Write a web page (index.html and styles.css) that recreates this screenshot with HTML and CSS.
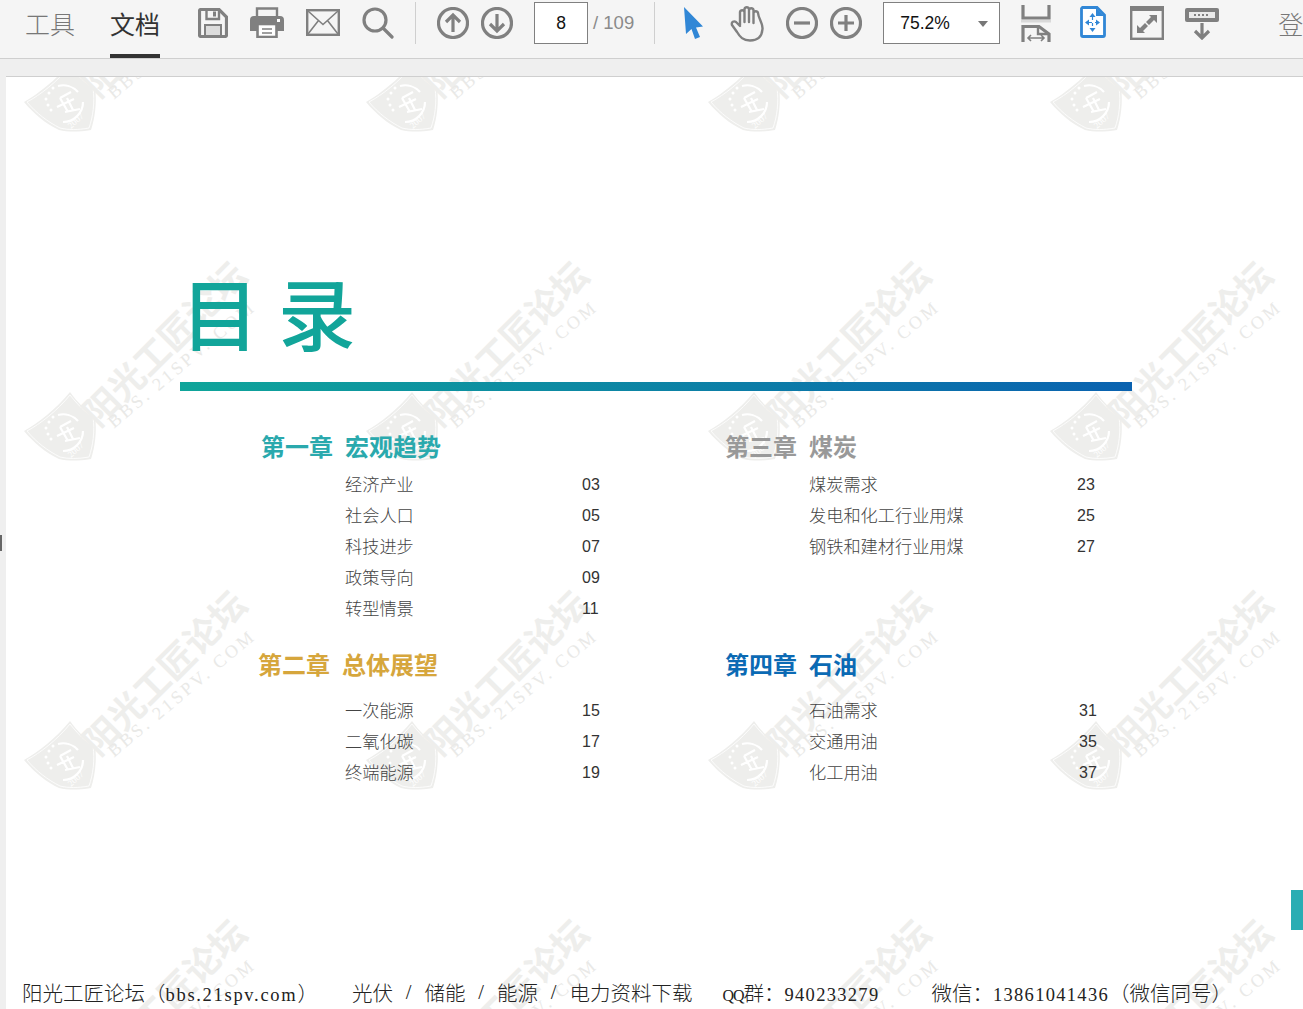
FILE: index.html
```html
<!DOCTYPE html>
<html lang="zh-CN">
<head>
<meta charset="utf-8">
<title>目录</title>
<link rel="stylesheet" href="styles.css">
</head>
<body>
<svg class="defs" width="0" height="0" aria-hidden="true">
  <defs>
    <symbol id="shield" viewBox="0 0 72 70">
      <path d="M0 40 C14 32 32 18 46 1 C54 12 62 20 71 25 C73 40 71 56 67 68 C54 70 44 70 35 68 C22 62 10 52 0 40Z" fill="#eeeeec"/>
      <path d="M3 40 C16 33 33 20 46 4 C54 14 61 21 69 26 C71 40 69 55 65 66 C54 68 44 68 36 66 C24 60 12 51 3 40Z" fill="none" stroke="#fff" stroke-width=".8"/>
      <path d="M34 24 A20 20 0 0 1 54 30 M59 40 A20 20 0 0 1 39 60" fill="none" stroke="#fff" stroke-width="2.2"/>
      <path d="M36 36 L47 30 M36 36 L44 50 M33 45 L50 37 M43 36 L49 48 M41 50 L56 47" fill="none" stroke="#fff" stroke-width="2.2"/>
      <circle cx="29" cy="26" r="1.5" fill="#fff"/><circle cx="25" cy="31" r="1.5" fill="#fff"/><circle cx="22" cy="37" r="1.5" fill="#fff"/><circle cx="24" cy="43" r="1.5" fill="#fff"/><circle cx="27" cy="48" r="1.5" fill="#fff"/>
      <text x="47" y="67" class="wm-year" transform="rotate(-42 47 67)">2007</text>
    </symbol>
  </defs>
</svg>

<header class="toolbar">
  <span class="tab tab-tools">工具</span>
  <span class="tab tab-doc">文档</span>

  <svg class="ic ic-save" width="30" height="30" viewBox="0 0 30 30"><path class="ln" d="M2.5 1.5H21L28.5 9V27A1.5 1.5 0 0 1 27 28.5H3A1.5 1.5 0 0 1 1.5 27V3A1.5 1.5 0 0 1 2.5 1.5Z"/><path class="ln2" d="M8.5 2V11H21V2"/><rect class="fl" x="15" y="3.5" width="3" height="5"/><rect x="7" y="17" width="16" height="11" fill="#dcdcdc" stroke="#808080" stroke-width="2"/></svg>
  <svg class="ic ic-print" width="34" height="32" viewBox="0 0 34 32"><path class="ln2" d="M7 12V2.5H27V12"/><path class="fl" d="M4 10H30A4 4 0 0 1 34 14V25H27V19H7V25H0V14A4 4 0 0 1 4 10Z"/><rect x="7.5" y="18" width="19" height="13" fill="#fff" stroke="#808080" stroke-width="2.6"/><path class="ln1" d="M12 23H22M12 27H22"/><rect x="27" y="13" width="3" height="3" fill="#fff"/></svg>
  <svg class="ic ic-mail" width="34" height="27" viewBox="0 0 34 27"><rect class="ln2" x="1.2" y="1.2" width="31.6" height="24.6"/><path class="ln1" d="M2 2L17 15.5L32 2M2 25L12.5 11.5M32 25L21.5 11.5"/></svg>
  <svg class="ic ic-search" width="32" height="32" viewBox="0 0 32 32"><circle class="ln" cx="13" cy="13" r="11"/><path class="ln" d="M21 21L30 30" stroke-linecap="round"/></svg>
  <span class="sep"></span>
  <svg class="ic ic-up" width="32" height="32" viewBox="0 0 32 32"><circle class="ln" cx="16" cy="16" r="14.5"/><path class="ln" d="M16 25V8M9 15L16 8L23 15"/></svg>
  <svg class="ic ic-down" width="32" height="32" viewBox="0 0 32 32"><circle class="ln" cx="16" cy="16" r="14.5"/><path class="ln" d="M16 7V24M9 17L16 24L23 17"/></svg>
  <span class="box page-box">8</span>
  <span class="page-total">/ 109</span>
  <span class="sep sep-b"></span>
  <svg class="ic ic-cursor" width="21" height="32" viewBox="0 0 21 32"><path fill="#3187d6" d="M1 0L20 19.5L13 20.5L17 30L12 32L8.500 22L3 27Z"/></svg>
  <svg class="ic ic-hand" width="35" height="37" viewBox="0 0 35 37"><path class="ln2" stroke-width="2.800" stroke-linejoin="round" stroke-linecap="round" d="M10 20V7A2.300 2.300 0 0 1 14.500 7V17M14.500 17V4A2.300 2.300 0 0 1 19 4V17M19 17V5A2.300 2.300 0 0 1 23.500 5V18M23.500 18V8A2.300 2.300 0 0 1 28 8C28.500 14 33 18 32.500 24C32 31 28 35.500 20 35.500C13 35.500 10 32 7 27L2 20C1 17 4 15.500 6 17L10 21"/></svg>
  <svg class="ic ic-minus" width="32" height="32" viewBox="0 0 32 32"><circle class="ln" cx="16" cy="16" r="14.500"/><path class="ln" d="M8 16H24"/></svg>
  <svg class="ic ic-plus" width="32" height="32" viewBox="0 0 32 32"><circle class="ln" cx="16" cy="16" r="14.500"/><path class="ln" d="M8 16H24M16 8V24"/></svg>
  <span class="box zoom-box">75.2%<i class="caret"></i></span>
  <svg class="ic ic-fitw" width="30" height="37" viewBox="0 0 30 37"><path class="ln" d="M2 0V13H28V0"/><rect x="0" y="15" width="30" height="2.500" fill="#d9d9d9"/><path class="ln" d="M2 37V21.500H18L28 29V37"/><path class="ln2" d="M17 22V29H27"/><path class="ln1" d="M7 33H23M10 30L7 33L10 36M20 30L23 33L20 36"/></svg>
  <svg class="ic ic-fitp" width="26" height="32" viewBox="0 0 26 32"><path fill="#fff" stroke="#3187d6" stroke-width="2.800" d="M2.500 1.500H17L24.500 9V29A1.500 1.500 0 0 1 23 30.500H3A1.500 1.500 0 0 1 1.500 29V2.500Z"/><path fill="#3187d6" d="M16 2L24 10H16Z"/><path fill="#3187d6" d="M12.500 7L15.500 11H9.500ZM12.500 26L15.500 22H9.500ZM5 16.500L9 13.500V19.500ZM20 16.500L16 13.500V19.500Z"/><path stroke="#3187d6" stroke-width="1.200" stroke-dasharray="3 3" d="M12.500 11V22M9 16.500H16"/></svg>
  <svg class="ic ic-full" width="34" height="34" viewBox="0 0 34 34"><rect class="ln2" x="1.200" y="1.200" width="31.600" height="31.600"/><rect class="fl" x="1" y="1" width="32" height="4"/><path fill="#808080" d="M19 9H27V17L24 14L19 19L16 16L21 11ZM15 27H7V19L10 22L15 17L18 20L13 25Z"/></svg>
  <svg class="ic ic-read" width="34" height="32" viewBox="0 0 34 32"><rect class="fl" x="0" y="0" width="34" height="14" rx="2"/><rect x="4" y="4" width="26" height="6" fill="#eaeaea"/><path stroke="#808080" stroke-width="2" stroke-dasharray="2 2" d="M9 7H25"/><path class="ln" d="M17 15V30M10 23L17 30L24 23"/></svg>
  <span class="tab tab-login">登录</span>
</header>

<main class="viewer">
  <div class="gutter"><i class="gutter-mark"></i></div>
  <section class="page">
    <div class="wm-layer" aria-hidden="true">
      <div class="wm"><svg class="wm-shield"><use href="#shield"/></svg><span class="wm-name">阳光工匠论坛</span><span class="wm-url">BBS. 21SPV. COM</span></div>
      <div class="wm"><svg class="wm-shield"><use href="#shield"/></svg><span class="wm-name">阳光工匠论坛</span><span class="wm-url">BBS. 21SPV. COM</span></div>
      <div class="wm"><svg class="wm-shield"><use href="#shield"/></svg><span class="wm-name">阳光工匠论坛</span><span class="wm-url">BBS. 21SPV. COM</span></div>
      <div class="wm"><svg class="wm-shield"><use href="#shield"/></svg><span class="wm-name">阳光工匠论坛</span><span class="wm-url">BBS. 21SPV. COM</span></div>
      <div class="wm"><svg class="wm-shield"><use href="#shield"/></svg><span class="wm-name">阳光工匠论坛</span><span class="wm-url">BBS. 21SPV. COM</span></div>
      <div class="wm"><svg class="wm-shield"><use href="#shield"/></svg><span class="wm-name">阳光工匠论坛</span><span class="wm-url">BBS. 21SPV. COM</span></div>
      <div class="wm"><svg class="wm-shield"><use href="#shield"/></svg><span class="wm-name">阳光工匠论坛</span><span class="wm-url">BBS. 21SPV. COM</span></div>
      <div class="wm"><svg class="wm-shield"><use href="#shield"/></svg><span class="wm-name">阳光工匠论坛</span><span class="wm-url">BBS. 21SPV. COM</span></div>
      <div class="wm"><svg class="wm-shield"><use href="#shield"/></svg><span class="wm-name">阳光工匠论坛</span><span class="wm-url">BBS. 21SPV. COM</span></div>
      <div class="wm"><svg class="wm-shield"><use href="#shield"/></svg><span class="wm-name">阳光工匠论坛</span><span class="wm-url">BBS. 21SPV. COM</span></div>
      <div class="wm"><svg class="wm-shield"><use href="#shield"/></svg><span class="wm-name">阳光工匠论坛</span><span class="wm-url">BBS. 21SPV. COM</span></div>
      <div class="wm"><svg class="wm-shield"><use href="#shield"/></svg><span class="wm-name">阳光工匠论坛</span><span class="wm-url">BBS. 21SPV. COM</span></div>
      <div class="wm"><svg class="wm-shield"><use href="#shield"/></svg><span class="wm-name">阳光工匠论坛</span><span class="wm-url">BBS. 21SPV. COM</span></div>
      <div class="wm"><svg class="wm-shield"><use href="#shield"/></svg><span class="wm-name">阳光工匠论坛</span><span class="wm-url">BBS. 21SPV. COM</span></div>
      <div class="wm"><svg class="wm-shield"><use href="#shield"/></svg><span class="wm-name">阳光工匠论坛</span><span class="wm-url">BBS. 21SPV. COM</span></div>
      <div class="wm"><svg class="wm-shield"><use href="#shield"/></svg><span class="wm-name">阳光工匠论坛</span><span class="wm-url">BBS. 21SPV. COM</span></div>
    </div>

    <h1 class="title"><span>目</span><span>录</span></h1>
    <div class="rule"></div>

    <div class="toc">
      <div class="chapter ch1">
        <h2 class="head"><span>第一章</span><span>宏观趋势</span></h2>
        <ul class="items">
          <li><span>经济产业</span><b>03</b></li>
          <li><span>社会人口</span><b>05</b></li>
          <li><span>科技进步</span><b>07</b></li>
          <li><span>政策导向</span><b>09</b></li>
          <li><span>转型情景</span><b>11</b></li>
        </ul>
      </div>
      <div class="chapter ch3">
        <h2 class="head"><span>第三章</span><span>煤炭</span></h2>
        <ul class="items">
          <li><span>煤炭需求</span><b>23</b></li>
          <li><span>发电和化工行业用煤</span><b>25</b></li>
          <li><span>钢铁和建材行业用煤</span><b>27</b></li>
        </ul>
      </div>
      <div class="chapter ch2">
        <h2 class="head"><span>第二章</span><span>总体展望</span></h2>
        <ul class="items">
          <li><span>一次能源</span><b>15</b></li>
          <li><span>二氧化碳</span><b>17</b></li>
          <li><span>终端能源</span><b>19</b></li>
        </ul>
      </div>
      <div class="chapter ch4">
        <h2 class="head"><span>第四章</span><span>石油</span></h2>
        <ul class="items">
          <li><span>石油需求</span><b>31</b></li>
          <li><span>交通用油</span><b>35</b></li>
          <li><span>化工用油</span><b>37</b></li>
        </ul>
      </div>
    </div>

    <footer class="foot">
      <span class="f f1">阳光工匠论坛（<em class="u">bbs.21spv.com</em>）</span>
      <span class="f f2">光伏</span><span class="f sl">/</span><span class="f">储能</span><span class="f sl">/</span><span class="f">能源</span><span class="f sl">/</span><span class="f">电力资料下载</span>
      <span class="f f3"><em class="q">QQ</em>群：<em class="d">940233279</em></span>
      <span class="f f4">微信：<em class="d">13861041436</em>（微信同号）</span>
    </footer>
    <i class="side-tab"></i>
  </section>
</main>
</body>
</html>
```
FILE: styles.css
```css
* { box-sizing: border-box; }
html, body { margin: 0; height: 1009px; overflow: hidden; }
body {
  display: flex;
  flex-direction: column;
  background: #efefef;
  font-family: "Noto Sans CJK SC", "Liberation Sans", sans-serif;
}
.defs { position: absolute; }

/* toolbar */
.toolbar {
  flex: none;
  height: 59px;
  display: flex;
  align-items: flex-start;
  background: #f5f5f5;
  border-bottom: 1px solid #cfcfcf;
  white-space: nowrap;
  overflow: hidden;
}
.tab {
  flex: none;
  height: 58px;
  padding-top: 5px;
  font-size: 25px;
  line-height: 36px;
  font-weight: 300;
  color: #777;
}
.tab-tools { margin-left: 25px; }
.tab-doc { margin-left: 35px; color: #333; font-weight: 400; border-bottom: 4px solid #333; }
.tab-login { margin-left: 59px; }

.ic { flex: none; display: block; }
.ln { fill: none; stroke: #808080; stroke-width: 3.2; }
.ln2 { fill: none; stroke: #808080; stroke-width: 2.4; }
.ln1 { fill: none; stroke: #808080; stroke-width: 1.6; }
.fl { fill: #808080; }

.ic-save { margin: 8px 0 0 38px; }
.ic-print { margin: 6px 0 0 22px; }
.ic-mail { margin: 9px 0 0 22px; }
.ic-search { margin: 7px 0 0 22px; }
.sep { flex: none; width: 1px; height: 42px; margin: 2px 0 0 21px; background: #cfcfcf; }
.ic-up { margin: 7px 0 0 21px; }
.ic-down { margin: 7px 0 0 12px; }
.box {
  flex: none;
  height: 42px;
  margin-top: 2px;
  background: #fff;
  border: 1px solid #808080;
  font-family: "Liberation Sans", sans-serif;
  font-size: 17.500px;
  line-height: 40px;
  color: #111;
}
.page-box { width: 54px; margin-left: 21px; text-align: center; }
.page-total {
  flex: none;
  margin: 2px 0 0 5px;
  font-family: "Liberation Sans", sans-serif;
  font-size: 18.500px;
  line-height: 42px;
  color: #8a8a8a;
}
.sep-b { margin-left: 20px; }
.ic-cursor { margin: 7px 0 0 28px; }
.ic-hand { margin: 5px 0 0 26px; }
.ic-minus { margin: 7px 0 0 21px; }
.ic-plus { margin: 7px 0 0 12px; }
.zoom-box { position: relative; width: 117px; margin-left: 21px; padding-left: 16px; }
.caret {
  position: absolute;
  right: 11px;
  top: 18px;
  border-left: 5px solid transparent;
  border-right: 5px solid transparent;
  border-top: 6px solid #777;
}
.ic-fitw { margin: 5px 0 0 21px; }
.ic-fitp { margin: 6px 0 0 29px; }
.ic-full { margin: 6px 0 0 24px; }
.ic-read { margin: 8px 0 0 21px; }

/* viewer */
.viewer { flex: 1; min-height: 0; display: flex; padding-top: 17px; }
.gutter { flex: none; width: 6px; position: relative; }
.gutter-mark { position: absolute; left: 0; top: 459px; width: 2px; height: 16px; background: #666; }

.page {
  flex: 1;
  min-width: 0;
  position: relative;
  overflow: hidden;
  display: flex;
  flex-direction: column;
  background: #fff;
  border-top: 1px solid #cfcfcf;
}

/* watermark */
.wm-layer {
  position: absolute;
  left: 18px;
  top: -15px;
  display: grid;
  grid-template-columns: repeat(4, 342px);
  grid-auto-rows: 329px;
}
.wm { position: relative; }
.wm-shield { position: absolute; left: 0; top: 0; width: 72px; height: 70px; }
.wm-year { font-family: "Liberation Serif", serif; font-size: 9px; fill: #fff; }
.wm-name {
  position: absolute;
  left: 78px;
  top: 1px;
  font-family: "Noto Sans CJK SC", sans-serif;
  font-size: 35.500px;
  line-height: 40px;
  font-weight: 700;
  color: #eeeeec;
  white-space: nowrap;
  transform: rotate(-45deg);
  transform-origin: 0 100%;
}
.wm-url {
  position: absolute;
  left: 92px;
  top: 22px;
  font-family: "Liberation Serif", serif;
  font-size: 18px;
  line-height: 18px;
  letter-spacing: 3px;
  color: #e9e9e7;
  white-space: nowrap;
  transform: rotate(-40deg);
  transform-origin: 0 100%;
}

/* title */
.title {
  position: relative;
  margin: 184px 0 0 175px;
  display: flex;
  gap: 19px;
  height: 100px;
  font-size: 78px;
  line-height: 100px;
  font-weight: 500;
  color: #12a59a;
}
.rule {
  position: relative;
  flex: none;
  width: 952px;
  height: 9px;
  margin: 21px 0 0 174px;
  background: linear-gradient(90deg, #0fa59a, #0a62b0);
}

/* contents */
.toc {
  position: relative;
  display: grid;
  grid-template-columns: 464px 1fr;
  grid-template-rows: 218px 1fr;
  margin: 38px 0 0 252px;
}
.head {
  margin: 0;
  display: flex;
  gap: 12px;
  height: 34px;
  font-size: 24px;
  line-height: 34px;
  font-weight: 700;
}
.items { list-style: none; margin: 5px 0 0; padding: 0; }
.items li {
  display: flex;
  height: 31px;
  font-size: 17.200px;
  line-height: 31px;
  font-weight: 300;
  color: #444;
}
.items span { flex: none; }
.items b {
  font-family: "Liberation Sans", sans-serif;
  font-size: 16px;
  line-height: 33px;
  font-weight: 400;
  color: #333;
}
.ch1 .head { margin-left: 3px; color: #2aa9ad; }
.ch2 .head { color: #d6a63c; }
.ch3 .head { margin-left: 3px; color: #999; }
.ch4 .head { margin-left: 3px; color: #0b6ab4; }
.ch1 .items, .ch2 .items { margin-left: 87px; }
.ch3 .items, .ch4 .items { margin-left: 87px; }
.ch2 .items, .ch4 .items { margin-top: 13px; }
.items span { width: 237px; }
.ch3 .items span { width: 268px; }
.ch4 .items span { width: 270px; }

/* footer */
.foot {
  position: relative;
  margin-top: auto;
  margin-left: 16px;
  height: 32px;
  display: flex;
  white-space: nowrap;
  font-family: "Noto Sans CJK SC", sans-serif;
  font-size: 20.500px;
  line-height: 30px;
  font-weight: 300;
  color: #222;
}
.f { flex: none; }
.f em { font-style: normal; font-family: "Liberation Serif", serif; font-size: 18.500px; }
.f .u { letter-spacing: 1.700px; }
.f .d { letter-spacing: 1.300px; }
.f .q { font-size: 16px; letter-spacing: -1px; }
.f2 { margin-left: 34px; }
.sl { width: 31.500px; text-align: center; font-family: "Liberation Serif", serif; }
.f3 { margin-left: 30px; }
.f4 { margin-left: 52px; }

.side-tab { position: absolute; right: 0; top: 813px; width: 12px; height: 40px; background: #2aadb3; }
```
